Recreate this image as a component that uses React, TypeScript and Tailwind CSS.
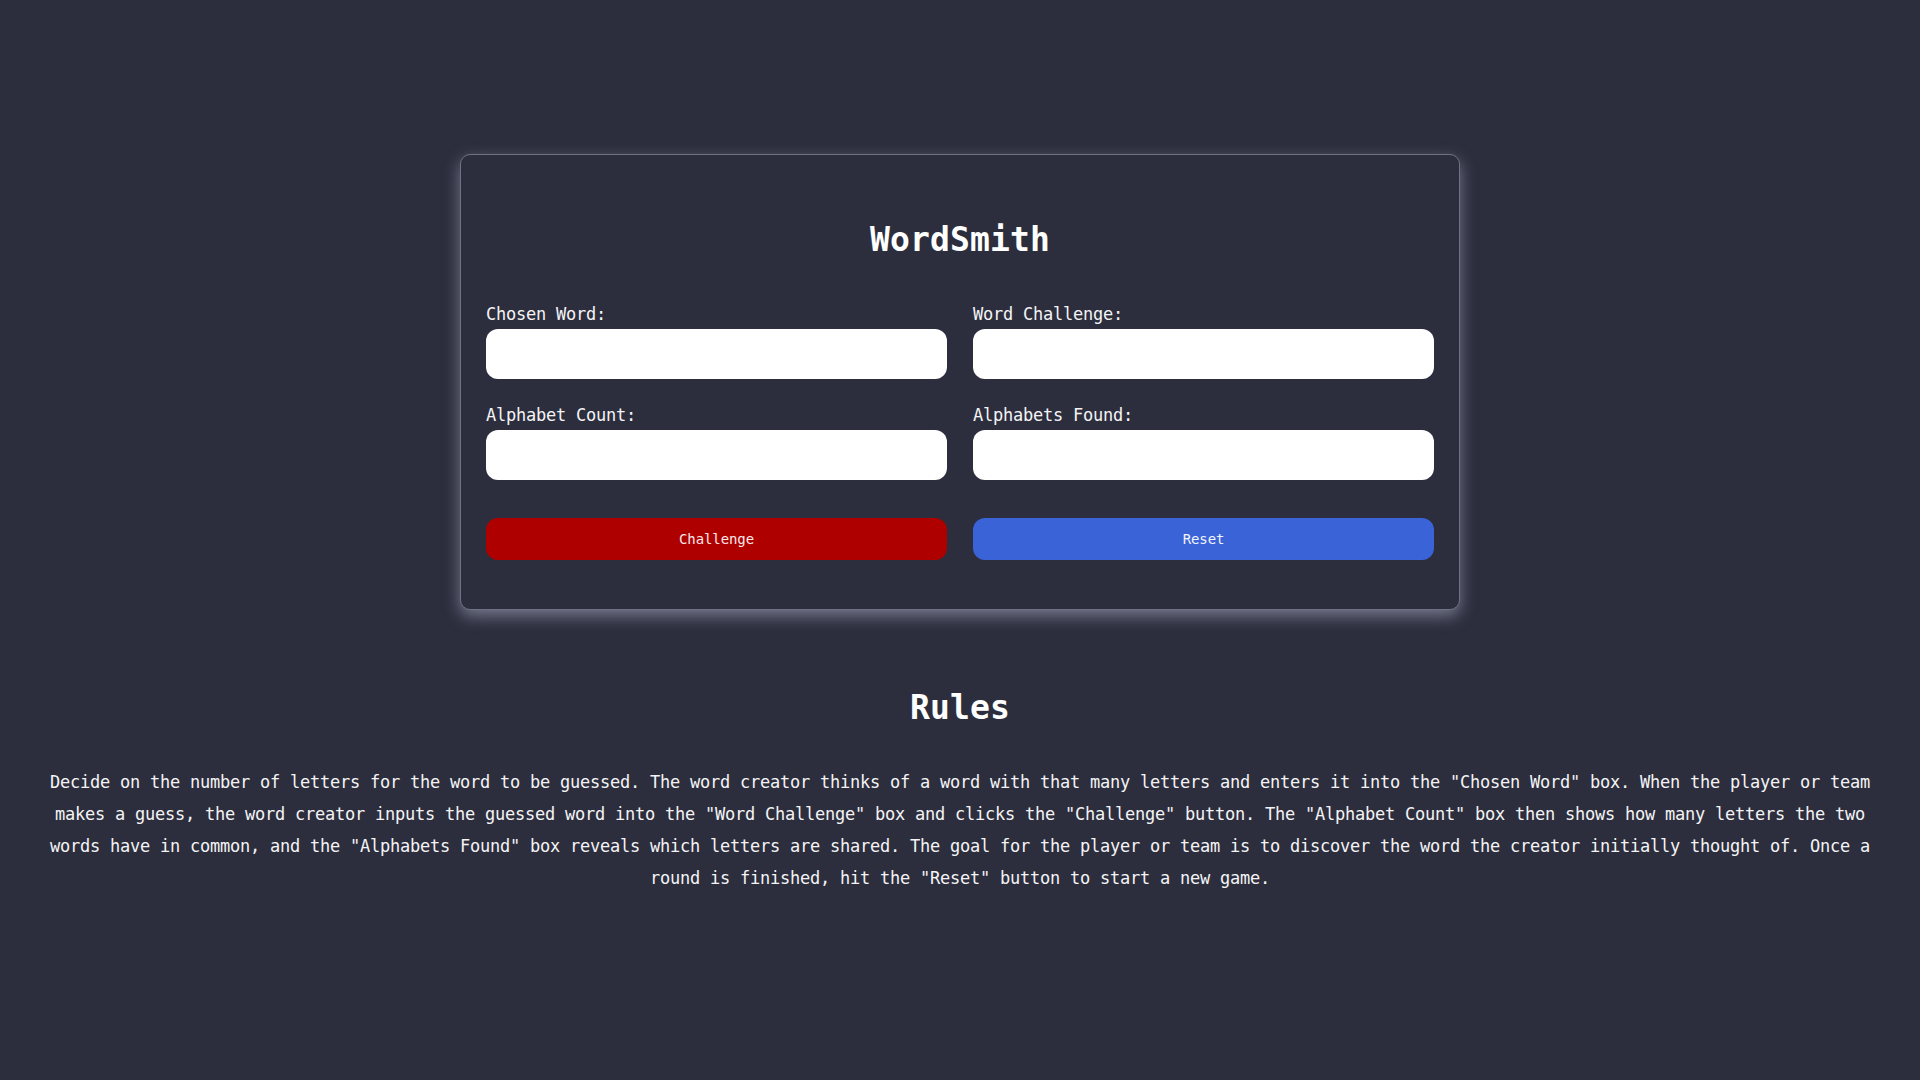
import React from "react";

const mono = { fontFamily: '"DejaVu Sans Mono", "Liberation Mono", monospace' };

function Field({ label }: { label: string }) {
  return (
    <div className="flex flex-col">
      <label className="pt-[1px] text-[17px] tracking-[-0.235px] leading-[24px] h-[25px] text-[#f4f4f6]">{label}</label>
      <input
        type="text"
        className="mt-[3px] h-[50px] w-full rounded-[12px] bg-white px-3 text-black outline-none"
      />
    </div>
  );
}

export default function App() {
  return (
    <div className="min-h-screen w-full bg-[#2c2e3d] text-white" style={mono}>
      <div className="flex flex-col items-center pt-[154px]">
        <div className="w-[1000px] rounded-[10px] border border-[#6e7283] bg-[#2c2e3d] px-[25px] pt-[25px] pb-[25px] shadow-[0_6px_16px_rgba(165,170,195,0.6)]">
          <h1 className="mt-[36px] text-center text-[33px] font-bold leading-[48px] tracking-[0.13px] text-white">
            WordSmith
          </h1>
          <div className="mt-[37px] grid grid-cols-2 gap-x-[26px] gap-y-[23px]">
            <Field label="Chosen Word:" />
            <Field label="Word Challenge:" />
            <Field label="Alphabet Count:" />
            <Field label="Alphabets Found:" />
          </div>
          <div className="mt-[38px] mb-[24px] grid grid-cols-2 gap-x-[26px]">
            <button className="h-[42px] rounded-[12px] bg-[#af0000] text-[14px] tracking-[-0.1px] text-[#f6e8e8]">
              Challenge
            </button>
            <button className="h-[42px] rounded-[12px] bg-[#3a63d8] text-[14px] tracking-[-0.1px] text-[#f2f4fb]">
              Reset
            </button>
          </div>
        </div>
      </div>
      <h2 className="mt-[74px] text-center text-[33px] font-bold leading-[48px] tracking-[0.13px] text-white">
        Rules
      </h2>
      <div className="px-[48px] pt-[34px] pb-[100px]">
        <p className="text-center text-[17px] leading-[32px] tracking-[-0.235px] text-[#f4f4f6]">
          Decide on the number of letters for the word to be guessed. The word creator thinks of a word with that many letters and enters it into the "Chosen Word" box. When the player or team makes a guess, the word creator inputs the guessed word into the "Word Challenge" box and clicks the "Challenge" button. The "Alphabet Count" box then shows how many letters the two words have in common, and the "Alphabets Found" box reveals which letters are shared. The goal for the player or team is to discover the word the creator initially thought of. Once a round is finished, hit the "Reset" button to start a new game.
        </p>
      </div>
    </div>
  );
}
